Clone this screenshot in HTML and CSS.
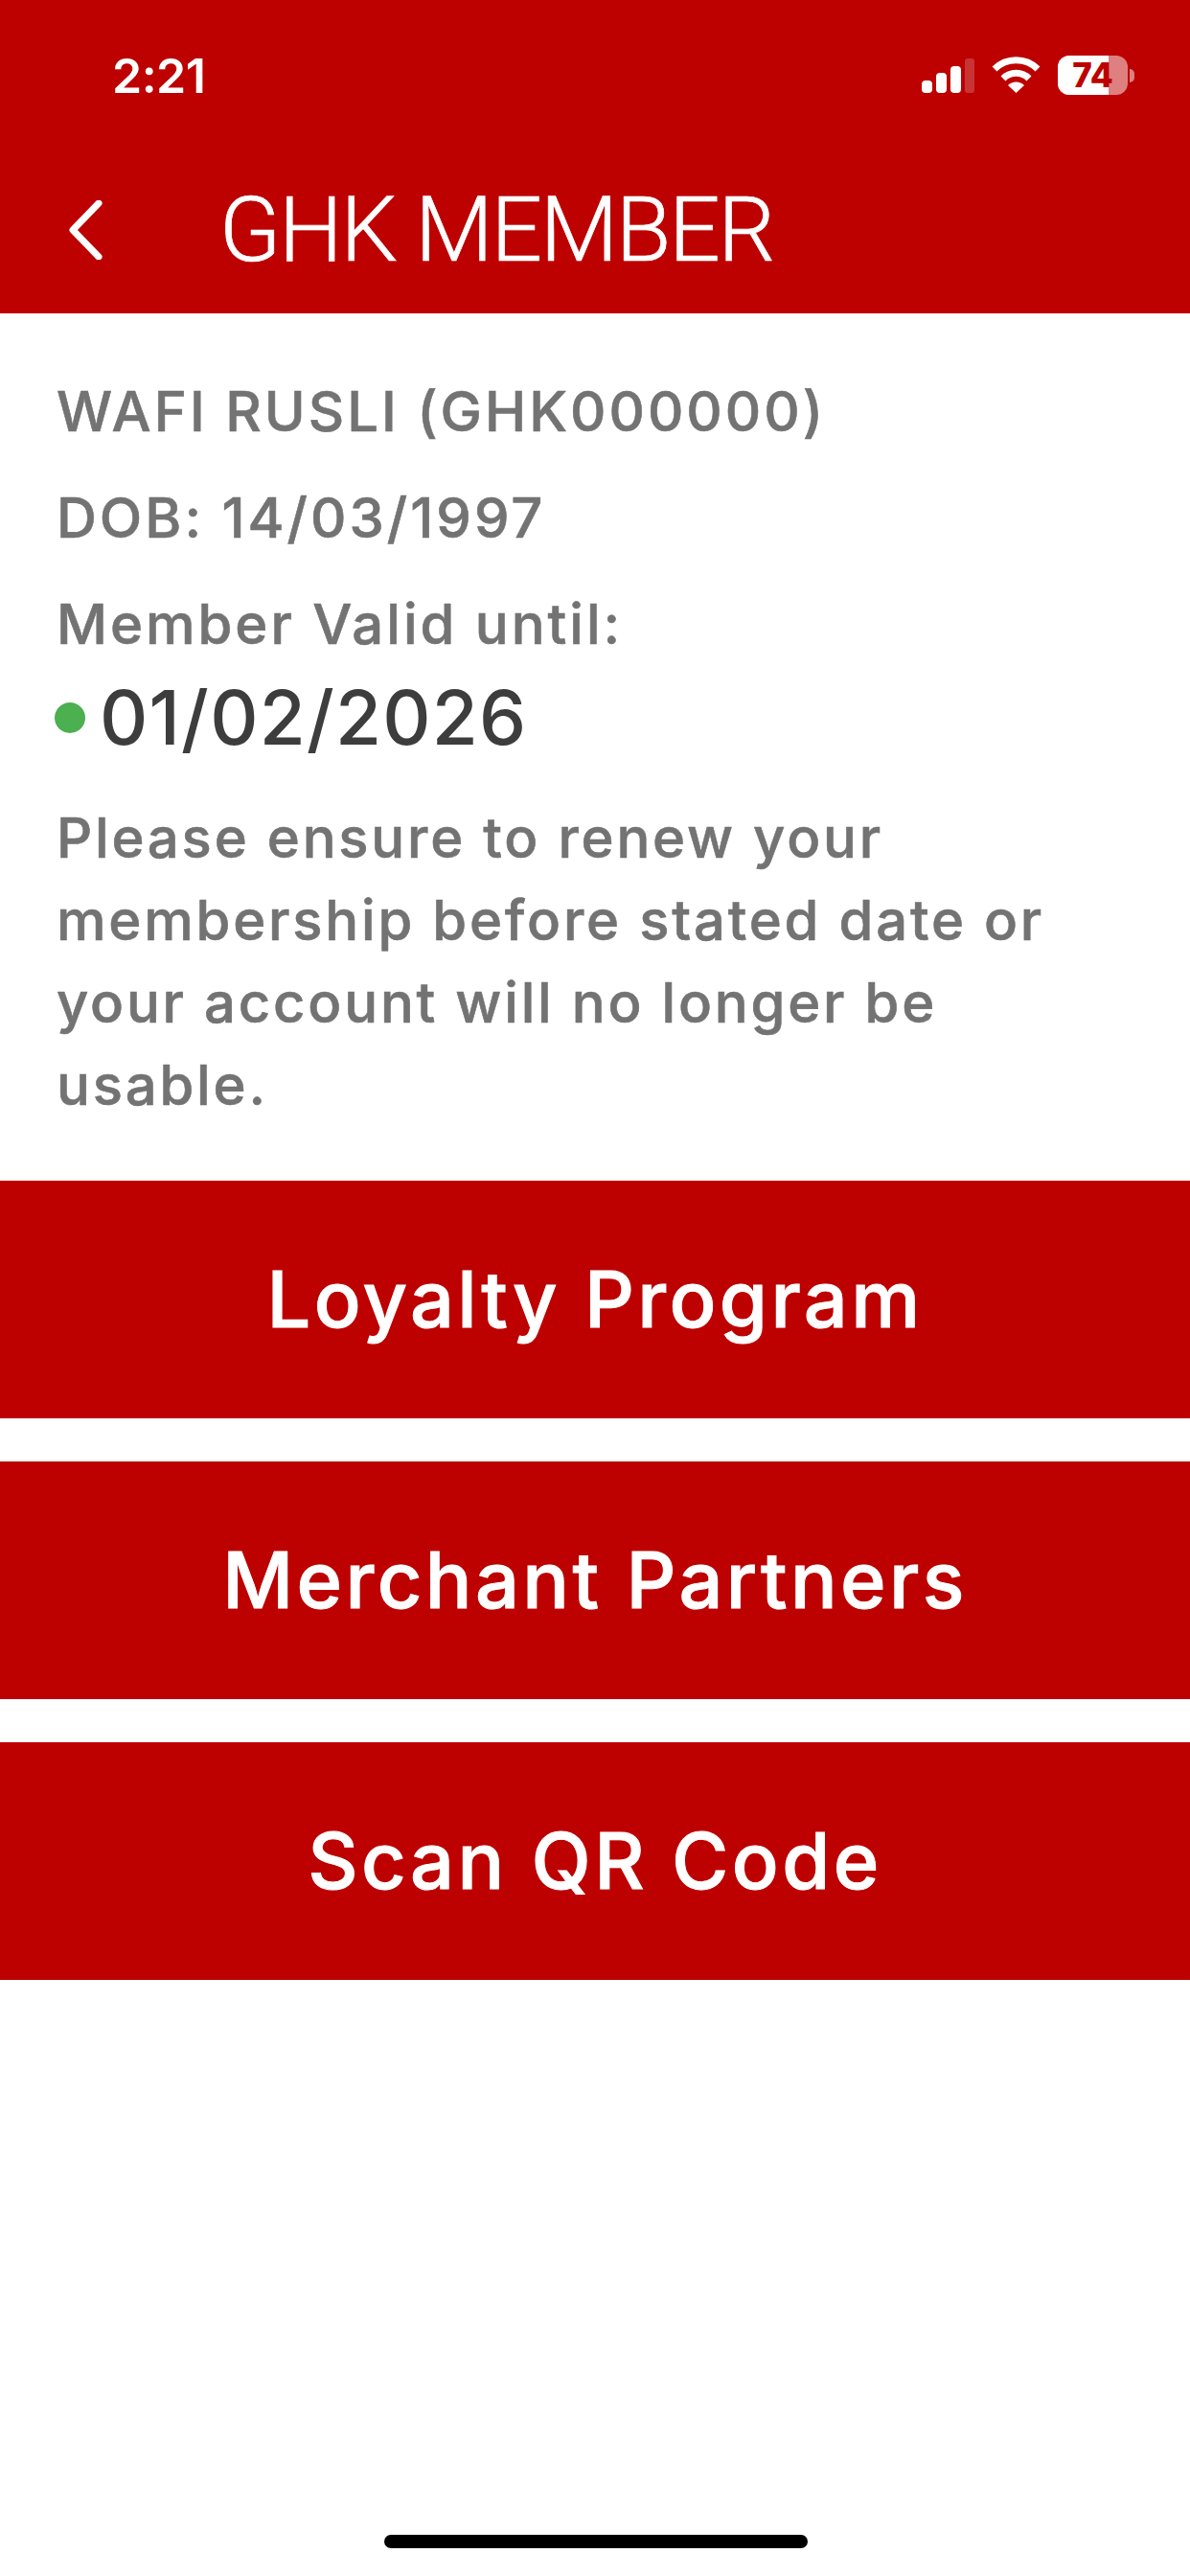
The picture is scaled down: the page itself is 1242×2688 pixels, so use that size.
FILE: index.html
```html
<!DOCTYPE html>
<html lang="en">
<head>
    <meta charset="UTF-8">
    <meta name="viewport" content="width=device-width, initial-scale=1.0">
    <title>GHK Member</title>
    <link rel="stylesheet" href="styles.css">
</head>
<body>
    <header class="top">
        <div class="status">
            <span class="time">2:21</span>
            <div class="status-icons">
                <svg class="signal" width="55" height="38" viewBox="0 0 55 38">
                    <rect x="0" y="23" width="11" height="13" rx="4" fill="#fff"/>
                    <rect x="15" y="15" width="11" height="21" rx="4" fill="#fff"/>
                    <rect x="30" y="8" width="11" height="28" rx="4" fill="#fff"/>
                    <rect x="45" y="0" width="10" height="36" rx="3" fill="#fff" opacity="0.2"/>
                </svg>
                <svg class="wifi" width="51" height="39" viewBox="0 0 51 39">
                    <path d="M3 14 A32 32 0 0 1 48 14" fill="none" stroke="#fff" stroke-width="7"/>
                    <path d="M12 24 A19 19 0 0 1 39 24" fill="none" stroke="#fff" stroke-width="7"/>
                    <path d="M17 31 A12 12 0 0 1 34 31 L25.5 39 Z" fill="#fff"/>
                </svg>
                <div class="battery">
                    <div class="battery-body">
                        <span class="battery-fill"></span>
                        <span class="battery-num">74</span>
                    </div>
                    <span class="battery-tip"></span>
                </div>
            </div>
        </div>
        <div class="titlebar">
            <svg class="back" width="36" height="62" viewBox="0 0 36 62">
                <path d="M32 3 L5 31 L32 59" fill="none" stroke="#fff" stroke-width="7" stroke-linecap="round" stroke-linejoin="round"/>
            </svg>
            <h1>GHK MEMBER</h1>
        </div>
    </header>

    <section class="info">
        <p class="line">WAFI RUSLI (GHK000000)</p>
        <p class="line">DOB: 14/03/1997</p>
        <p class="line">Member Valid until:</p>
        <div class="valid-row">
            <span class="dot"></span>
            <span class="valid-date">01/02/2026</span>
        </div>
        <p class="note">Please ensure to renew your membership before stated date or your account will no longer be usable.</p>
    </section>

    <nav class="menu">
        <a class="menu-btn">Loyalty Program</a>
        <a class="menu-btn">Merchant Partners</a>
        <a class="menu-btn">Scan QR Code</a>
    </nav>

    <div class="home-bar"></div>
</body>
</html>
```

FILE: styles.css
```css
* {
    box-sizing: border-box;
}

body {
    margin: 0;
    width: 1242px;
    height: 2688px;
    background-color: #ffffff;
    font-family: Inter, Roboto, sans-serif;
    display: flex;
    flex-direction: column;
    overflow: hidden;
}

.top {
    height: 327px;
    background-color: #bd0000;
    color: #ffffff;
}

.status {
    height: 201px;
    padding: 50px 58px 0 117px;
    display: flex;
    justify-content: space-between;
    align-items: flex-start;
}

.time {
    font-size: 50px;
    font-weight: 600;
    line-height: 58px;
    letter-spacing: -0.5px;
}

.status-icons {
    display: flex;
    align-items: flex-start;
    padding-top: 8px;
}

.signal {
    margin-right: 18px;
    margin-top: 3px;
}

.wifi {
    margin-right: 18px;
}

.battery {
    display: flex;
    align-items: center;
    height: 41px;
}

.battery-body {
    position: relative;
    width: 73px;
    height: 41px;
    border-radius: 12px;
    background-color: rgba(255, 255, 255, 0.5);
    overflow: hidden;
    text-align: center;
}

.battery-fill {
    position: absolute;
    left: 0;
    top: 0;
    bottom: 0;
    width: 53px;
    background-color: #ffffff;
}

.battery-num {
    position: relative;
    font-size: 35px;
    font-weight: 800;
    line-height: 41px;
    color: #bd0000;
}

.battery-tip {
    width: 5px;
    height: 14px;
    margin-left: 2px;
    border-radius: 0 5px 5px 0;
    background-color: rgba(255, 255, 255, 0.5);
}

.titlebar {
    display: flex;
    align-items: center;
    padding-left: 71px;
    height: 78px;
}

.back {
    flex-shrink: 0;
}

.titlebar h1 {
    margin: 0 0 0 122px;
    font-family: Roboto, sans-serif;
    font-size: 94px;
    font-weight: 300;
    line-height: 78px;
    letter-spacing: -2.2px;
    white-space: nowrap;
    -webkit-text-stroke: 0.7px #ffffff;
}

.info {
    padding: 73px 59px 0;
    height: 905px;
    color: #737373;
    font-weight: 500;
    font-size: 58px;
    -webkit-text-stroke: 0.6px #737373;
}

.line {
    margin: 0 0 53px;
    font-size: 58px;
    line-height: 58px;
    letter-spacing: 3px;
    white-space: nowrap;
}

.valid-row {
    display: flex;
    align-items: center;
    height: 80px;
    margin-top: -24px;
    margin-left: -2px;
}

.dot {
    width: 32px;
    height: 32px;
    border-radius: 50%;
    background-color: #4caf50;
    margin-right: 15px;
}

.valid-date {
    font-size: 78px;
    font-weight: 500;
    line-height: 80px;
    letter-spacing: 1.2px;
    color: #3d3d3d;
    -webkit-text-stroke: 0;
}

.note {
    margin: 42px 0 0;
    font-size: 58px;
    line-height: 86px;
    letter-spacing: 2.8px;
}

.menu {
    display: flex;
    flex-direction: column;
    gap: 45px;
}

.menu-btn {
    height: 248px;
    display: flex;
    align-items: center;
    justify-content: center;
    background-color: #bd0000;
    color: #ffffff;
    font-size: 81px;
    font-weight: 500;
    letter-spacing: 3.4px;
    -webkit-text-stroke: 1px #ffffff;
}

.home-bar {
    position: absolute;
    left: 401px;
    top: 2645px;
    width: 442px;
    height: 14px;
    border-radius: 7px;
    background-color: #000000;
}
```
